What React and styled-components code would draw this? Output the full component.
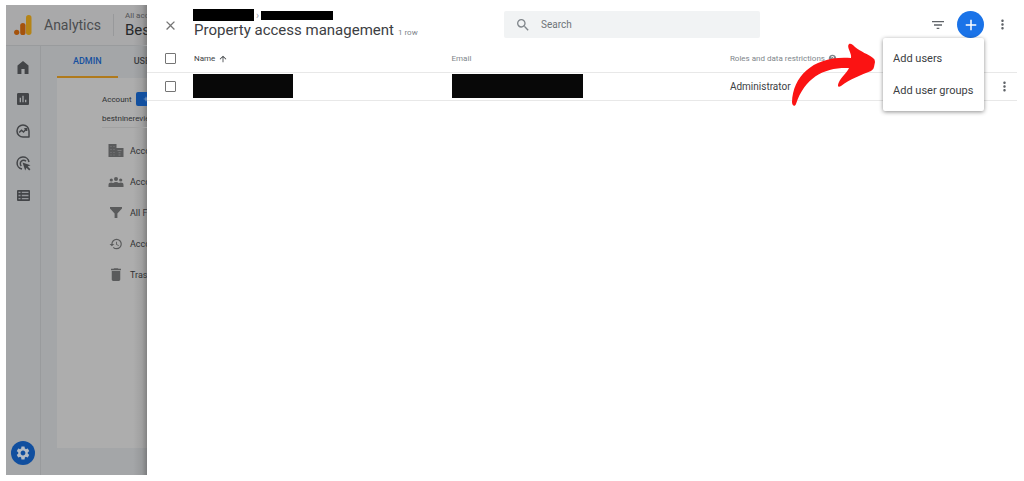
import React from 'react';
import styled, { createGlobalStyle } from 'styled-components';
import {
  MdAdd,
  MdArrowUpward,
  MdClose,
  MdDelete,
  MdFilterList,
  MdHelp,
  MdHistory,
  MdInsertChart,
  MdMoreVert,
  MdSearch,
  MdSettings,
} from 'react-icons/md';

const GlobalStyle = createGlobalStyle`
  * {
    box-sizing: border-box;
  }

  body {
    margin: 0;
    background: #fff;
    color: #3c4043;
    font-family: Roboto, "Liberation Sans", sans-serif;
    font-size: 10px;
  }

  button {
    padding: 0;
    border: 0;
    background: none;
    color: inherit;
    font: inherit;
    cursor: pointer;
  }
`;

const Page = styled.div`
  display: grid;
  grid-template-columns: 141px minmax(0, 1fr);
  min-height: 100vh;
  padding: 5px 7px 6px 6px;
`;

/* Dimmed application behind the drawer */

const edgeShade = 'linear-gradient(to left, rgba(0, 0, 0, 0.25), rgba(0, 0, 0, 0.08) 5px, rgba(0, 0, 0, 0) 14px)';

const Backdrop = styled.div`
  display: flex;
  flex-direction: column;
  overflow: hidden;
  background: ${edgeShade}, #a4a6a8;
  white-space: nowrap;
`;

const BrandBar = styled.header`
  display: flex;
  align-items: center;
  height: 41px;
  padding-left: 8px;
  border-bottom: 1px solid #999b9d;
  background: ${edgeShade}, #a9a9aa;

  svg {
    flex: none;
  }
`;

const Brand = styled.div`
  flex: none;
  width: 69px;
  margin-left: 12px;
  color: #4b4d50;
  font-size: 14px;
`;

const Account = styled.div`
  display: flex;
  flex: none;
  flex-direction: column;
  justify-content: center;
  height: 22px;
  padding-left: 11px;
  border-left: 1px solid #98999b;
  color: #505254;
  font-size: 8px;
  line-height: 10px;

  strong {
    color: #26282a;
    font-size: 15px;
    font-weight: 400;
    line-height: 18px;
  }
`;

const BackdropBody = styled.div`
  display: flex;
  flex: 1;
`;

const Rail = styled.nav`
  display: flex;
  flex: none;
  flex-direction: column;
  align-items: center;
  gap: 16px;
  width: 35px;
  padding: 13px 0 10px;
  border-right: 1px solid #999b9d;
`;

const RailButton = styled.button`
  display: flex;
  align-items: center;
  justify-content: center;
  width: 16px;
  height: 16px;
  color: #434548;
`;

const SettingsButton = styled(RailButton)`
  width: 24px;
  height: 24px;
  margin-top: auto;
  border-radius: 50%;
  background: #114f9f;
  color: #b6bcc4;
`;

const Admin = styled.div`
  display: flex;
  flex: 1;
  flex-direction: column;
  min-width: 0;
  padding: 0 0 27px 16px;
`;

const Tabs = styled.div`
  display: flex;
  height: 32px;
`;

const Tab = styled.button`
  flex: none;
  padding: 0 16px;
  border-bottom: 2px solid ${({ $active }) => ($active ? '#b07a1c' : 'transparent')};
  color: ${({ $active }) => ($active ? '#17519f' : '#393b3e')};
  font-size: 9px;
  font-weight: 500;
`;

const Sheet = styled.div`
  flex: 1;
  padding: 14px 0 0 45px;
  background: ${edgeShade}, #adadad;
  color: #2f3133;
  font-size: 8px;
`;

const AccountRow = styled.div`
  display: flex;
  align-items: center;
  gap: 4px;
`;

const CreateButton = styled.button`
  display: flex;
  flex: none;
  align-items: center;
  width: 60px;
  height: 14px;
  padding-left: 6px;
  border-radius: 2px;
  background: #114f9f;
  color: #a9b6c8;
`;

const AccountName = styled.div`
  height: 16px;
  margin-top: 6px;
  border-bottom: 1px solid #a1a1a1;
  line-height: 13px;
`;

const AccountMenu = styled.ul`
  margin: 7px 0 0;
  padding: 0 0 0 5px;
  list-style: none;
`;

const AccountItem = styled.li`
  display: flex;
  align-items: center;
  height: 31px;
  gap: 5px;
  font-size: 9px;

  svg {
    flex: none;
    width: 18px;
    color: #5a5b5c;
  }
`;

/* Drawer */

const Drawer = styled.main`
  min-width: 0;
  background: #fff;
`;

const Toolbar = styled.header`
  display: grid;
  grid-template-columns: 46px minmax(0, 311fr) minmax(0, 256fr) minmax(0, 257fr);
  height: 41px;
`;

const CloseButton = styled.button`
  display: flex;
  align-items: center;
  justify-content: center;
  height: 40px;
  color: #757575;
`;

const Heading = styled.div`
  padding-top: 4px;
  white-space: nowrap;
`;

const Crumbs = styled.div`
  display: flex;
  align-items: center;
  gap: 2px;
  height: 12px;
  color: #9aa0a6;
  font-size: 10px;
`;

const Redacted = styled.span`
  display: block;
  width: ${({ $width }) => $width}px;
  height: ${({ $height }) => $height}px;
  background: ${({ $soft }) => ($soft ? '#080808' : '#000')};
`;

const TitleRow = styled.div`
  display: flex;
  align-items: baseline;
  gap: 4px;
  padding-left: 1px;
`;

const Title = styled.h1`
  margin: 0;
  color: #3c4043;
  font-size: 15px;
  font-weight: 400;
  line-height: 18px;
`;

const RowCount = styled.span`
  color: #80868b;
  font-size: 8px;
`;

const SearchBox = styled.label`
  display: flex;
  align-items: center;
  gap: 10px;
  height: 27px;
  margin-top: 6px;
  padding-left: 11px;
  border-radius: 2px;
  background: #f1f3f4;
  color: #80868b;

  input {
    flex: 1;
    min-width: 0;
    padding: 0;
    border: 0;
    outline: 0;
    background: none;
    color: #3c4043;
    font: inherit;
  }

  input::placeholder {
    color: #6f7478;
    opacity: 1;
  }
`;

const Actions = styled.div`
  display: flex;
  align-items: center;
  justify-content: flex-end;
  gap: 11px;
  height: 39px;
  padding-right: 7px;
`;

const IconButton = styled.button`
  display: flex;
  align-items: center;
  justify-content: center;
  color: #5f6368;
`;

const AddAnchor = styled.div`
  position: relative;
`;

const AddButton = styled.button`
  display: flex;
  align-items: center;
  justify-content: center;
  width: 27px;
  height: 27px;
  border-radius: 50%;
  background: #1a73e8;
  color: #fff;
`;

const AddMenu = styled.div`
  position: absolute;
  top: 100%;
  right: 0;
  z-index: 2;
  display: flex;
  flex-direction: column;
  width: 101px;
  padding: 4px 0 5px;
  border-radius: 2px;
  background: #fff;
  box-shadow: 0 1px 4px rgba(0, 0, 0, 0.45);
`;

const MenuItem = styled.button`
  height: 32px;
  padding-left: 10px;
  color: #3c4043;
  font-size: 11px;
  text-align: left;
  white-space: nowrap;
`;

const Arrow = styled.svg`
  position: absolute;
  top: 32px;
  right: 109px;
  z-index: 3;
  width: 84px;
  height: 64px;
  pointer-events: none;
`;

const UserTable = styled.table`
  width: 100%;
  table-layout: fixed;
  border-collapse: collapse;

  th,
  td {
    height: 28px;
    padding: 0;
    border-bottom: 1px solid #e8e8e8;
    text-align: left;
    white-space: nowrap;
  }

  th {
    height: 26px;
    color: #80868b;
    font-size: 8px;
    font-weight: 400;
  }

  td {
    color: #3c4043;
  }
`;

const CheckColumn = styled.col`
  width: 46px;
`;

const Column = styled.col`
  width: ${({ $share }) => $share}%;
`;

const Checkbox = styled.input`
  display: block;
  width: 11px;
  height: 11px;
  margin: 0 0 0 18px;
  border: 1px solid #757575;
  border-radius: 1px;
  appearance: none;

  &:checked {
    background: #1a73e8;
  }
`;

const SortButton = styled.button`
  display: flex;
  align-items: center;
  gap: 3px;
  padding-left: 1px;
  color: #3c4043;
`;

const HeaderLabel = styled.span`
  display: flex;
  align-items: center;
  gap: 3px;
`;

const RowMenu = styled(IconButton)`
  margin: 0 5px 0 auto;
`;

function AnalyticsLogo() {
  return (
    <svg width="18" height="20" viewBox="0 0 18 20" aria-hidden="true">
      <rect x="12" y="0" width="5.5" height="20" rx="2.7" fill="#b58416" />
      <rect x="6.2" y="8" width="5.3" height="12" rx="2.6" fill="#a5530c" />
      <circle cx="2.7" cy="17.3" r="2.6" fill="#a5530c" />
    </svg>
  );
}

function HomeIcon() {
  return (
    <svg width="12" height="13" viewBox="0 0 12 13" aria-hidden="true">
      <path fill="currentColor" d="M6 0 11.5 4.6V13H7.6V8H4.4V13H0.5V4.6Z" />
    </svg>
  );
}

function ExploreIcon() {
  return (
    <svg width="14" height="14" viewBox="0 0 14 14" fill="none" stroke="currentColor" aria-hidden="true">
      <path d="M7 13A6 6 0 1 1 13 7V13Z" strokeWidth="1.5" strokeLinejoin="round" />
      <path d="M3.2 8.6 5.5 6.2 7.5 8 10.5 4.8M8.3 4.6h2.4V7" strokeWidth="1.4" />
    </svg>
  );
}

function AdvertisingIcon() {
  return (
    <svg width="15" height="15" viewBox="0 0 15 15" fill="none" stroke="currentColor" aria-hidden="true">
      <path d="M6 13A6 6 0 1 1 13 6" strokeWidth="1.5" />
      <path d="M5.3 10A3.3 3.3 0 1 1 10 5.3" strokeWidth="1.5" />
      <path d="M6.5 6.5 14.5 9.2 11.7 10.5 14.4 13.2 13.2 14.4 10.5 11.7 9.2 14.5Z" fill="currentColor" stroke="none" />
    </svg>
  );
}

function ConfigureIcon() {
  return (
    <svg width="13" height="11" viewBox="0 0 13 11" aria-hidden="true">
      <rect width="13" height="11" rx="1" fill="currentColor" />
      <path
        fill="#94969a"
        d="M1.5 1.7h2v1.4h-2zM4.8 1.7h6.7v1.4H4.8zM1.5 4.8h2v1.4h-2zM4.8 4.8h6.7v1.4H4.8zM1.5 7.9h2v1.4h-2zM4.8 7.9h6.7v1.4H4.8z"
      />
    </svg>
  );
}

function BuildingIcon() {
  return (
    <svg width="15" height="13" viewBox="0 0 15 13" aria-hidden="true">
      <path fill="currentColor" d="M0 0H8V4H15V13H0Z" />
      <path
        fill="#7c7d7e"
        d="M2 2h1v1H2zM5 2h1v1H5zM2 5h1v1H2zM5 5h1v1H5zM2 8h1v1H2zM5 8h1v1H5zM2 10.5h1v1H2zM5 10.5h1v1H5zM9 6h4v1H9zM10 8.3h2v1h-2zM10 10.4h2v1h-2z"
      />
    </svg>
  );
}

function PeopleIcon() {
  return (
    <svg width="15" height="10" viewBox="0 0 15 10" fill="currentColor" aria-hidden="true">
      <circle cx="2.8" cy="3" r="1.6" />
      <circle cx="7.5" cy="2" r="2" />
      <circle cx="12.2" cy="3" r="1.6" />
      <path d="M0 10V8Q0 5.6 2.8 5.6 4 5.6 4.7 6 5.8 5 7.5 5T10.3 6Q11 5.6 12.2 5.6 15 5.6 15 8V10Z" />
    </svg>
  );
}

function FunnelIcon() {
  return (
    <svg width="12" height="12" viewBox="0 0 12 12" aria-hidden="true">
      <path fill="currentColor" d="M0 0H12V1.4L7.4 6.4V11H4.6V6.4L0 1.4Z" />
    </svg>
  );
}

const accountItems = [
  { id: 'settings', label: 'Account', icon: <BuildingIcon /> },
  { id: 'access', label: 'Account', icon: <PeopleIcon /> },
  { id: 'filters', label: 'All Filters', icon: <FunnelIcon /> },
  { id: 'history', label: 'Account', icon: <MdHistory size={14} stroke="currentColor" /> },
  { id: 'trash', label: 'Trash', icon: <MdDelete size={17} /> },
];

function AdminBackdrop() {
  return (
    <Backdrop>
      <BrandBar>
        <AnalyticsLogo />
        <Brand>Analytics</Brand>
        <Account>
          All accounts
          <strong>Best</strong>
        </Account>
      </BrandBar>
      <BackdropBody>
        <Rail>
          <RailButton aria-label="Home"><HomeIcon /></RailButton>
          <RailButton aria-label="Reports"><MdInsertChart size={16} /></RailButton>
          <RailButton aria-label="Explore"><ExploreIcon /></RailButton>
          <RailButton aria-label="Advertising"><AdvertisingIcon /></RailButton>
          <RailButton aria-label="Configure"><ConfigureIcon /></RailButton>
          <SettingsButton aria-label="Admin"><MdSettings size={16} /></SettingsButton>
        </Rail>
        <Admin>
          <Tabs>
            <Tab $active>ADMIN</Tab>
            <Tab>USER</Tab>
          </Tabs>
          <Sheet>
            <AccountRow>
              Account
              <CreateButton aria-label="Create account"><MdAdd size={8} /></CreateButton>
            </AccountRow>
            <AccountName>bestninereview</AccountName>
            <AccountMenu>
              {accountItems.map((item) => (
                <AccountItem key={item.id}>
                  {item.icon}
                  {item.label}
                </AccountItem>
              ))}
            </AccountMenu>
          </Sheet>
        </Admin>
      </BackdropBody>
    </Backdrop>
  );
}

function AddUsers() {
  return (
    <AddAnchor>
      <AddButton aria-label="Add"><MdAdd size={18} /></AddButton>
      <AddMenu>
        <MenuItem>Add users</MenuItem>
        <MenuItem>Add user groups</MenuItem>
      </AddMenu>
      <Arrow viewBox="0 0 84 64" aria-hidden="true">
        <path
          fill="#fb1313"
          d="M58 1C60 0 62 2 64 4C70 9 77 11 82 15Q84 16 84 19L83 24Q83 26 80 28C70 32 59 36 50 43C47 45 46 43 48 39C50 34 56 30 58 25C34 24 14 34 5 61C4 64 1 63 1 59C2 32 24 12 60 15C61 10 55 4 58 1Z"
        />
      </Arrow>
    </AddAnchor>
  );
}

function App() {
  return (
    <>
      <GlobalStyle />
      <Page>
        <AdminBackdrop />
        <Drawer>
          <Toolbar>
            <CloseButton aria-label="Close"><MdClose size={15} /></CloseButton>
            <Heading>
              <Crumbs>
                <Redacted $width={61} $height={12} />
                ›
                <Redacted $width={72} $height={9} />
              </Crumbs>
              <TitleRow>
                <Title>Property access management</Title>
                <RowCount>1 row</RowCount>
              </TitleRow>
            </Heading>
            <SearchBox>
              <MdSearch size={16} />
              <input type="search" placeholder="Search" aria-label="Search" />
            </SearchBox>
            <Actions>
              <IconButton aria-label="Filter"><MdFilterList size={16} /></IconButton>
              <AddUsers />
              <IconButton aria-label="More options"><MdMoreVert size={15} /></IconButton>
            </Actions>
          </Toolbar>
          <UserTable>
            <colgroup>
              <CheckColumn />
              <col />
              <Column $share={32} />
              <Column $share={30} />
              <Column $share={3} />
            </colgroup>
            <thead>
              <tr>
                <th><Checkbox type="checkbox" aria-label="Select all rows" /></th>
                <th><SortButton>Name <MdArrowUpward size={10} /></SortButton></th>
                <th>Email</th>
                <th><HeaderLabel>Roles and data restrictions <MdHelp size={9} /></HeaderLabel></th>
                <th aria-label="Actions" />
              </tr>
            </thead>
            <tbody>
              <tr>
                <td><Checkbox type="checkbox" aria-label="Select row" /></td>
                <td><Redacted $soft $width={100} $height={24} /></td>
                <td><Redacted $soft $width={131} $height={24} /></td>
                <td>Administrator</td>
                <td><RowMenu aria-label="Row options"><MdMoreVert size={15} /></RowMenu></td>
              </tr>
            </tbody>
          </UserTable>
        </Drawer>
      </Page>
    </>
  );
}

export default App;
